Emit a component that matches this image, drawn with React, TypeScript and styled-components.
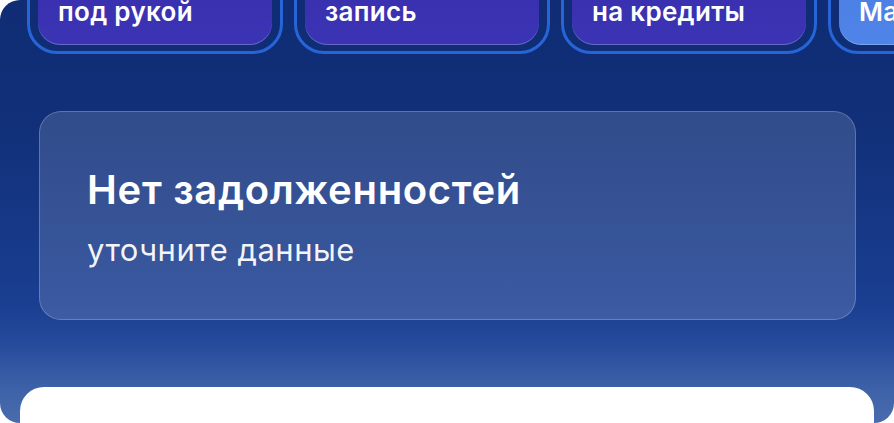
import styled, { createGlobalStyle } from "styled-components"

const GlobalStyle = createGlobalStyle`
  html, body {
    margin: 0;
    padding: 0;
    background: #ffffff;
  }
  body {
    font-family: Inter, "Noto Sans", "Liberation Sans", sans-serif;
  }
`

const Screen = styled.div`
  width: 894px;
  height: 423px;
  overflow: hidden;
  display: flex;
  flex-direction: column;
  border-radius: 20px 0 20px 20px;
  background: linear-gradient(
    180deg,
    #0f2c74 0%,
    #113079 30%,
    #1a3e91 72%,
    #24489a 80%,
    #3e62a8 92%,
    #4a6cae 100%
  );
`

const TilesRow = styled.div`
  height: 54px;
  flex-shrink: 0;
  display: flex;
  align-items: flex-end;
  gap: 11px;
  padding-left: 27px;
  overflow: hidden;
`

const TileRing = styled.div`
  flex: 0 0 auto;
  width: 256px;
  height: 130px;
  box-sizing: border-box;
  border: 3px solid #2764d6;
  border-radius: 30px;
  padding: 7px 8px 6px;
  display: flex;
`

const Tile = styled.div<{ $light?: boolean }>`
  flex: 1;
  border-radius: 22px;
  background: ${(p) =>
    p.$light
      ? "linear-gradient(180deg, #4a7be0 0%, #4f84e8 100%)"
      : "linear-gradient(180deg, #3a2cab 0%, #3a34b4 100%)"};
  box-shadow: inset 0 -1px 0 rgba(255, 255, 255, 0.25);
  display: flex;
  flex-direction: column;
  justify-content: flex-end;
  padding: 0 20px 19px 20px;
  color: #ffffff;
  font-size: 26px;
  font-weight: 600;
  line-height: 28px;
  letter-spacing: 0.3px;
  white-space: nowrap;
`

const Card = styled.div`
  margin: 57px 38px 0 39px;
  height: 209px;
  box-sizing: border-box;
  border-radius: 22px;
  border: 1px solid rgba(255, 255, 255, 0.22);
  background: rgba(255, 255, 255, 0.14);
  padding: 54px 47px 0;
  display: flex;
  flex-direction: column;
  color: #ffffff;
`

const Title = styled.div`
  font-size: 40px;
  font-weight: 600;
  line-height: 48px;
  letter-spacing: 0.7px;
`

const Subtitle = styled.div`
  margin-top: 18px;
  font-size: 31px;
  font-weight: 400;
  line-height: 36px;
  letter-spacing: 0.5px;
  color: rgba(255, 255, 255, 0.95);
`

const Sheet = styled.div`
  margin: 67px 20px 0;
  flex: 1;
  background: #ffffff;
  border-radius: 24px 24px 0 0;
`

const tiles = [
  { label: "под рукой" },
  { label: "запись" },
  { label: "на кредиты" },
  { label: "Маркет", light: true },
]

export default function App() {
  return (
    <>
      <GlobalStyle />
      <Screen>
        <TilesRow>
          {tiles.map((t) => (
            <TileRing key={t.label}>
              <Tile $light={t.light}>{t.label}</Tile>
            </TileRing>
          ))}
        </TilesRow>
        <Card>
          <Title>Нет задолженностей</Title>
          <Subtitle>уточните данные</Subtitle>
        </Card>
        <Sheet />
      </Screen>
    </>
  )
}
